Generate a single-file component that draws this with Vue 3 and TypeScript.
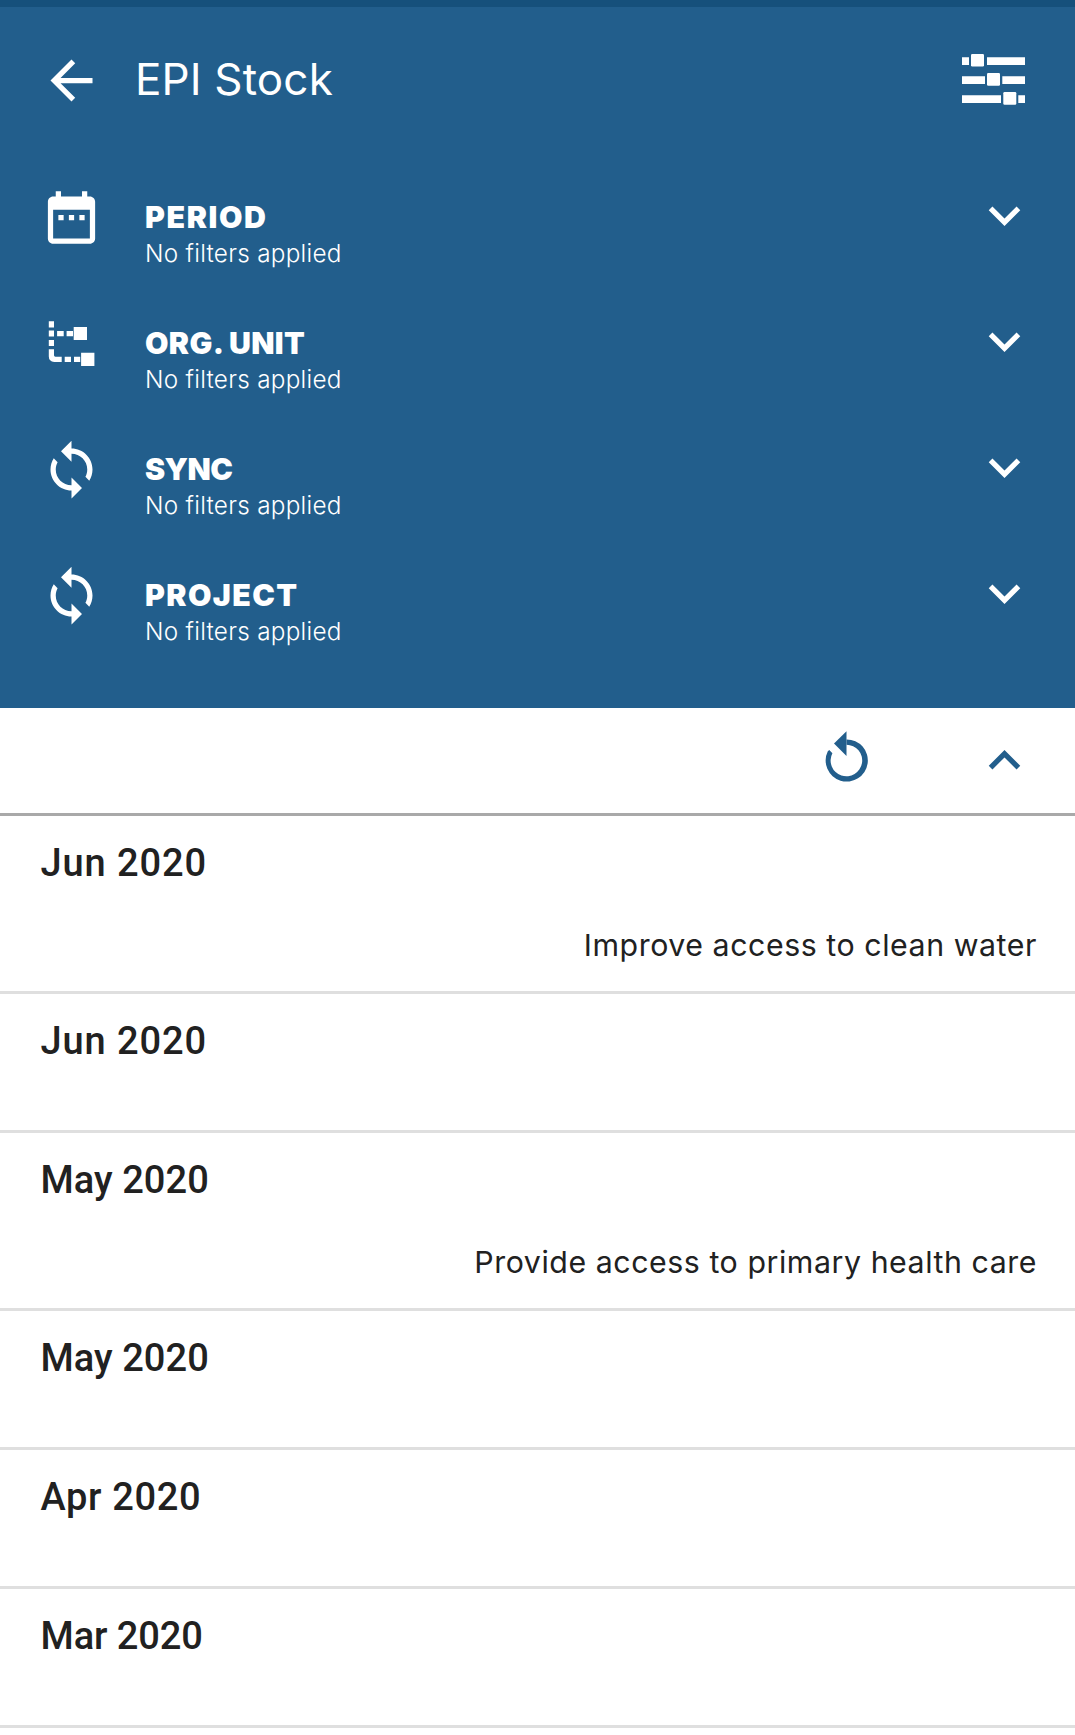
<script setup lang="ts">
type IconName = 'calendar' | 'tree' | 'sync'

interface Filter {
  label: string
  value: string
  icon: IconName
  tracking: number
}

interface Entry {
  period: string
  tracking: number
  description?: string
}

const filters: Filter[] = [
  { label: 'PERIOD', value: 'No filters applied', icon: 'calendar', tracking: 1.6 },
  { label: 'ORG. UNIT', value: 'No filters applied', icon: 'tree', tracking: 0.35 },
  { label: 'SYNC', value: 'No filters applied', icon: 'sync', tracking: -0.6 },
  { label: 'PROJECT', value: 'No filters applied', icon: 'sync', tracking: 1.4 },
]

const entries: Entry[] = [
  { period: 'Jun 2020', tracking: 0.9, description: 'Improve access to clean water' },
  { period: 'Jun 2020', tracking: 0.9 },
  { period: 'May 2020', tracking: 0.05, description: 'Provide access to primary health care' },
  { period: 'May 2020', tracking: 0.05 },
  { period: 'Apr 2020', tracking: 0.65 },
  { period: 'Mar 2020', tracking: -0.1 },
]
</script>

<template>
  <div class="screen">
    <div class="status-strip"></div>
    <header class="header">
      <div class="app-bar">
        <svg class="icon" viewBox="0 0 24 24">
          <path d="M20 11H7.83l5.59-5.59L12 4l-8 8 8 8 1.41-1.41L7.83 13H20v-2z" />
        </svg>
        <h1 class="title">EPI Stock</h1>
        <svg class="icon" viewBox="0 0 63 63">
          <path d="M0 8.3h7v7.8H0zM25 8.3h38v7.8H25zM0 27.3h23v7.8H0zM40.3 27.3H63v7.8H40.3zM0 46.3h39v7.8H0zM56.3 46.3H63v7.8H56.3z" />
          <rect x="9" y="5" width="13" height="12.5" rx="1.2" />
          <rect x="25" y="24" width="13" height="12.7" rx="1.2" />
          <rect x="41.3" y="43" width="13" height="12.7" rx="1.2" />
        </svg>
      </div>

      <div v-for="f in filters" :key="f.label" class="filter">
        <svg v-if="f.icon === 'calendar'" class="icon lead" viewBox="0 0 24 24">
          <path d="M9 11H7v2h2v-2zm4 0h-2v2h2v-2zm4 0h-2v2h2v-2zm2-7h-1V2h-2v2H8V2H6v2H5c-1.11 0-1.99.9-1.99 2L3 20c0 1.1.89 2 2 2h14c1.1 0 2-.9 2-2V6c0-1.1-.9-2-2-2zm0 16H5V9h14v11z" />
        </svg>
        <svg v-else-if="f.icon === 'tree'" class="icon lead" viewBox="0 0 63 63">
          <path d="M8.8 9.2H14v6.4H8.8zM8.8 18.4H14v6.2H8.8zM8.8 27.9H14v6.1H8.8zM17.1 19h6.6v5.2h-6.6zM26.6 19H33v5.2h-6.4zM33.7 15.1H47v13H33.7zM24.7 44.7H31V50h-6.3zM34 44.7h6.2V50H34zM41.1 40.7h13.3V54H41.1z" />
          <path d="M8.8 37.3H14v6q0 1.4 1.4 1.4h6.3V50h-7.4q-5.5-.6-5.5-5.5z" />
        </svg>
        <svg v-else class="icon lead" viewBox="0 0 24 24">
          <path d="M12 4V1L8 5l4 4V6c3.31 0 6 2.69 6 6 0 1.01-.25 1.97-.7 2.8l1.46 1.46C19.54 15.03 20 13.57 20 12c0-4.42-3.58-8-8-8zm0 14c-3.31 0-6-2.69-6-6 0-1.01.25-1.97.7-2.8L5.24 7.74C4.46 8.97 4 10.43 4 12c0 4.42 3.58 8 8 8v3l4-4-4-4v3z" />
        </svg>
        <div class="filter-text">
          <div class="filter-label" :style="{ letterSpacing: f.tracking + 'px' }">{{ f.label }}</div>
          <div class="filter-value">{{ f.value }}</div>
        </div>
        <svg class="icon chevron" viewBox="0 0 24 24">
          <path d="M16.59 8.59L12 13.17 7.41 8.59 6 10l6 6 6-6z" />
        </svg>
      </div>
    </header>

    <div class="toolbar">
      <svg class="icon" viewBox="0 0 63 63">
        <path d="M31.5 10.4A21.1 21.1 0 1 1 12.8 22.2L14.3 20.9L17.4 24.2A15.8 15.8 0 1 0 31.5 15.7z" />
        <path d="M31.5 2.3L19 14.6L31.5 27z" />
      </svg>
      <svg class="icon" viewBox="0 0 24 24">
        <path d="M12 8l-6 6 1.41 1.41L12 10.83l4.59 4.58L18 14z" />
      </svg>
    </div>

    <main>
      <section v-for="(e, i) in entries" :key="i" class="entry" :class="{ tall: e.description }">
        <h2 class="entry-title" :style="{ letterSpacing: e.tracking + 'px' }">{{ e.period }}</h2>
        <p v-if="e.description" class="entry-desc">{{ e.description }}</p>
      </section>
    </main>
  </div>
</template>

<style>
body {
  background: #fff;
}
</style>

<style scoped>
.screen {
  width: 100%;
  height: 1735px;
  overflow: hidden;
  background: #fff;
  font-family: Inter, sans-serif;
}
.status-strip {
  height: 7px;
  background: #16507b;
}
.header {
  box-sizing: border-box;
  height: 701px;
  background: #225e8c;
  color: #fff;
}
.icon {
  display: block;
  flex: none;
  width: 63px;
  height: 63px;
  fill: currentColor;
}
.app-bar {
  display: flex;
  align-items: center;
  box-sizing: border-box;
  height: 147px;
  padding: 0 50px 0 40px;
}
.title {
  flex: 1;
  margin: 0 0 0 32px;
  padding-bottom: 3px;
  font-size: 44px;
  font-weight: 400;
  line-height: 60px;
  letter-spacing: 0.15px;
}
.filter {
  display: flex;
  align-items: flex-start;
  box-sizing: border-box;
  height: 126px;
  padding: 0 39px 0 40px;
}
.lead {
  margin-top: 32px;
}
.filter-text {
  flex: 1;
  margin-left: 42px;
  padding-top: 45px;
}
.filter-label {
  font-size: 30.3px;
  font-weight: 900;
  line-height: 36px;
}
.filter-value {
  font-size: 24.3px;
  font-weight: 300;
  line-height: 36px;
  letter-spacing: 0.28px;
}
.chevron {
  margin-top: 30px;
}
.toolbar {
  display: flex;
  align-items: center;
  justify-content: flex-end;
  gap: 95px;
  box-sizing: border-box;
  height: 108px;
  padding-right: 39px;
  border-bottom: 3px solid #a9a9a9;
  color: #225e8c;
}
.entry {
  display: flex;
  flex-direction: column;
  box-sizing: border-box;
  height: 139px;
  padding: 22px 38px 0 40.5px;
  border-bottom: 3px solid #dfdfdf;
  color: #212121;
}
.entry.tall {
  height: 178px;
}
.entry-title {
  margin: 0;
  font-family: Roboto, sans-serif;
  font-size: 38px;
  font-weight: 500;
  line-height: 50px;
}
.entry-desc {
  margin: 37px 0 0;
  font-size: 30.3px;
  line-height: 40px;
  letter-spacing: 0.56px;
  text-align: right;
}
</style>
